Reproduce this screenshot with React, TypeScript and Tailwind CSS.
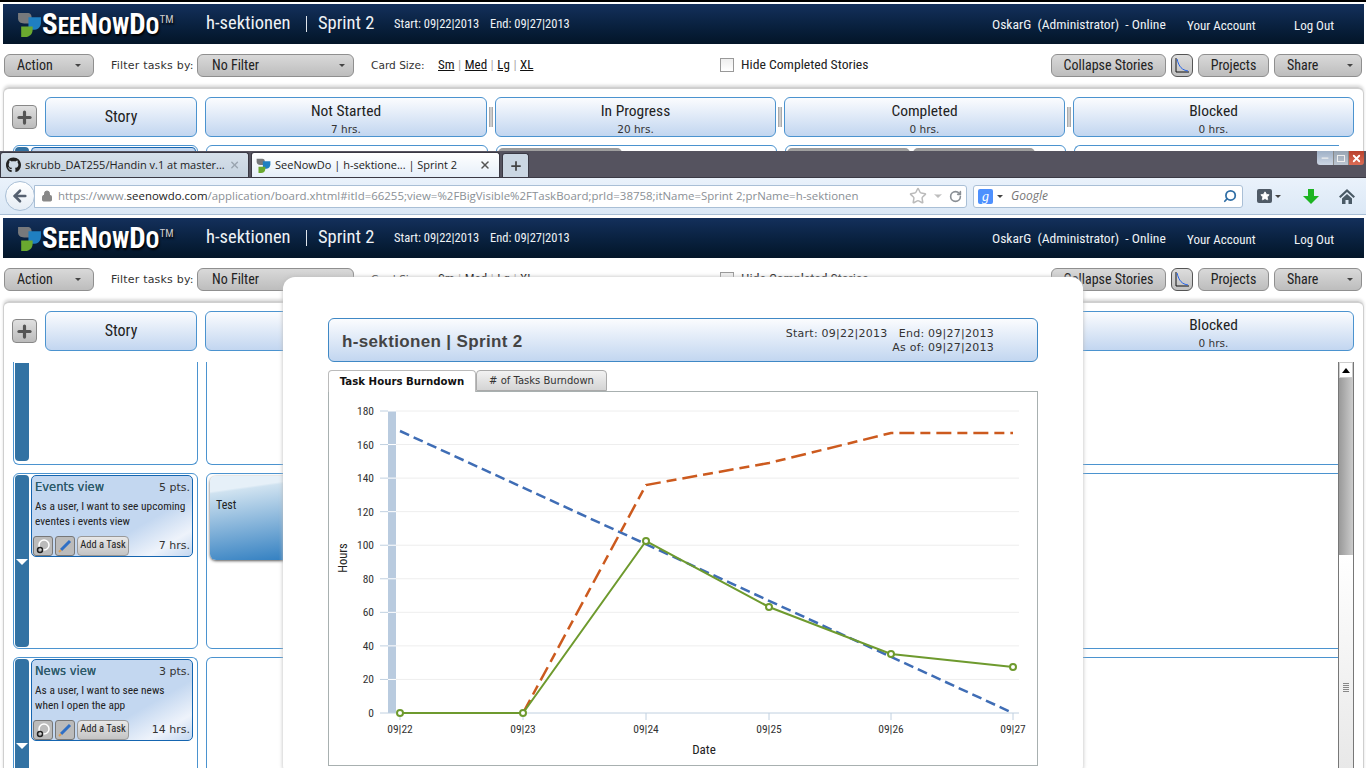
import { ArrowLeft, ChevronDown, Lock, Minus, Plus, RotateCw, Search, Star, X } from "lucide-react";
import { FaGithub } from "react-icons/fa";

const wide = "font-['DejaVu_Sans',sans-serif]";
const COLUMNS = [
  { name: "Not Started", hrs: "7 hrs.", width: "w-[282px]" },
  { name: "In Progress", hrs: "20 hrs.", width: "w-[281px]" },
  { name: "Completed", hrs: "0 hrs.", width: "w-[281px]" },
  { name: "Blocked", hrs: "0 hrs.", width: "w-[281px]" },
];

function Caret() {
  return <span className="h-0 w-0 border-x-[3px] border-t-[3px] border-x-transparent border-t-[#444]" />;
}

function LogoMark({ size = 25 }: { size?: number }) {
  return (
    <svg width={size} height={size} viewBox="0 0 24 24">
      <path d="M1 1h9c3 0 4 2 4 4v6H7C3 11 1 9 1 6z" fill="#77797c" />
      <path d="M11 5h12v5c0 3-2 7-6 7h-6z" fill="#1f7fc1" />
      <path d="M4 14h11v3c0 4-3 7-7 7H4z" fill="#6aa92f" />
    </svg>
  );
}

function AppHeader() {
  return (
    <div className="ml-[3px] mr-[2px] flex h-10 items-center whitespace-nowrap bg-gradient-to-b from-[#14305c] to-[#031528] text-[#eef2f6]">
      <div className="flex w-[203px] items-center pl-[14px]">
        <LogoMark />
        <span className="flex items-baseline font-bold leading-none text-white [text-shadow:1px_2px_2px_#000]">
          <span className="text-[29px]">S</span>
          <span className="text-[23px]">EE</span>
          <span className="text-[29px]">N</span>
          <span className="text-[23px]">OW</span>
          <span className="text-[29px]">D</span>
          <span className="text-[23px]">O</span>
          <span className="relative -top-[11px] text-[11px] font-normal text-[#ccc]">TM</span>
        </span>
      </div>
      <span className="w-[100px] text-[18.5px]">h-sektionen</span>
      <span className="h-[16px] w-[12px] border-l border-[#dfe5ec]" />
      <span className="w-[76px] text-[18.5px]">Sprint 2</span>
      <span className="mt-[1px] w-[96px] text-[12.5px]">Start: 09|22|2013</span>
      <span className="mt-[1px] w-[502px] text-[12.5px]">End: 09|27|2013</span>
      <span className="mt-[1px] w-[195px] text-[13.6px]">OskarG&nbsp; (Administrator)&nbsp; - Online</span>
      <span className="mt-[3px] w-[107px] text-[13px]">Your Account</span>
      <span className="mt-[3px] text-[13px]">Log Out</span>
    </div>
  );
}

function GreyButton({ label, width, caret, textClass }: { label: string; width: string; caret?: boolean; textClass?: string }) {
  return (
    <div className={`flex h-[23px] shrink-0 items-center justify-between rounded-[6px] border border-[#8f8f8f] bg-gradient-to-b from-[#d9d9d9] to-[#bdbdbd] text-[14px] text-[#222] ${width} ${textClass ?? "px-3"}`}>
      <span>{label}</span>
      {caret && <Caret />}
    </div>
  );
}

function Toolbar() {
  return (
    <div className="flex h-[43px] items-center whitespace-nowrap pb-[1px] pl-1">
      <GreyButton label="Action" width="w-[90px]" caret />
      <span className={`ml-[17px] mt-[2px] w-[86px] shrink-0 text-[11px] tracking-[0.2px] text-[#333] [font-stretch:100%] ${wide}`}>Filter tasks by:</span>
      <GreyButton label="No Filter" width="w-[157px]" caret textClass="pl-[14px] pr-2" />
      <span className={`ml-[17px] mt-[2px] w-[67px] shrink-0 text-[10.6px] text-[#333] [font-stretch:100%] ${wide}`}>Card Size:</span>
      <span className="flex w-[282px] shrink-0 gap-[3.5px] text-[13px] text-[#111]">
        <span className="underline">Sm</span><span className="text-[#aaa]">|</span>
        <span className="underline">Med</span><span className="text-[#aaa]">|</span>
        <span className="underline">Lg</span><span className="text-[#aaa]">|</span>
        <span className="underline">XL</span>
      </span>
      <span className="h-[14px] w-[14px] shrink-0 border border-[#999] bg-gradient-to-b from-[#eee] to-white" />
      <span className="-mt-[2px] ml-[7px] w-[310px] shrink-0 text-[13.7px] text-[#222]">Hide Completed Stories</span>
      <GreyButton label="Collapse Stories" width="w-[115px]" textClass="justify-center" />
      <div className="ml-[5px] flex h-[23px] w-[22px] shrink-0 items-center justify-center rounded-[6px] border border-[#555] bg-gradient-to-b from-[#ddd] to-[#c0c0c0]">
        <svg width="16" height="17" viewBox="0 0 16 17" fill="none">
          <path d="M2 1v14h13" stroke="#111" />
          <path d="M3 2c2 8 5 11 11 12" stroke="#2563eb" />
        </svg>
      </div>
      <GreyButton label="Projects" width="ml-[5px] w-[71px]" textClass="justify-center" />
      <GreyButton label="Share" width="ml-[5px] w-[88px]" caret textClass="pl-3 pr-2" />
    </div>
  );
}

function ColumnHead({ name, hrs, width, covered }: { name: string; hrs: string; width: string; covered?: boolean }) {
  return (
    <div className={`flex h-10 shrink-0 flex-col items-center justify-center rounded-[6px] border border-[#4b93cf] bg-gradient-to-b from-[#fbfcfe] to-[#c2d6f0] pt-[4px] ${width}`}>
      {!covered && (
        <>
          <span className="text-[15.5px] leading-[19px] text-[#222]">{name}</span>
          <span className={`mt-[2px] text-[10.5px] leading-[13px] text-[#333] [font-stretch:100%] ${wide}`}>{hrs}</span>
        </>
      )}
    </div>
  );
}

function Grip() {
  return <div className="mx-[2px] h-5 w-[4px] shrink-0 self-center border-x border-[#aaa] bg-[#ccc]" />;
}

// covered: the chart dialog sits over the middle columns, their labels never show
function BoardHead({ covered }: { covered?: boolean }) {
  return (
    <div className="flex pl-[8px] pt-[8px]">
      <div className="mt-2 flex h-[24px] w-[25px] shrink-0 items-center justify-center rounded-[4px] border border-[#888] bg-gradient-to-b from-[#e0e0e0] to-[#bbb]">
        <Plus size={19} strokeWidth={4} color="#555" />
      </div>
      <div className="ml-2 flex h-10 w-[152px] shrink-0 items-center justify-center rounded-[6px] border border-[#4b93cf] bg-gradient-to-b from-[#fbfcfe] to-[#c2d6f0] text-[16px] text-[#222]">
        Story
      </div>
      <div className="w-2 shrink-0" />
      <ColumnHead {...COLUMNS[0]} covered={covered} />
      <Grip />
      <ColumnHead {...COLUMNS[1]} covered={covered} />
      <Grip />
      <ColumnHead {...COLUMNS[2]} covered={covered} />
      <Grip />
      <ColumnHead {...COLUMNS[3]} />
    </div>
  );
}

function TaskStub({ width }: { width: string }) {
  return <div className={`mt-[2px] ml-[1px] h-4 rounded-t-[5px] bg-gradient-to-b from-[#999] to-[#bbb] ${width}`} />;
}

function TopSection() {
  return (
    <section className="h-[151px] shrink-0 overflow-hidden border-t-2 border-black pt-[2px]">
      <AppHeader />
      <Toolbar />
      <div className="ml-[3px] mr-[2px] h-[70px] rounded-t-[6px] border-x border-t-2 border-[#cfcfcf] shadow-[0_-2px_3px_#ddd]">
        <BoardHead />
        <div className="mt-2 flex pl-[9px]">
          <div className="flex h-6 w-[185px] shrink-0 gap-[2px] rounded-t-[6px] border border-[#4b93cf] p-[1px]">
            <div className="h-4 w-[14px] rounded-t-[4px] bg-[#3272a3]" />
            <div className="h-4 flex-1 rounded-t-[4px] border border-[#1565b0] bg-[#c3d7f0]" />
          </div>
          <div className="ml-2 h-6 w-[282px] shrink-0 rounded-t-[6px] border border-[#4b93cf]" />
          <div className="ml-2 h-6 w-[281px] shrink-0 rounded-t-[6px] border border-[#4b93cf]"><TaskStub width="w-[124px]" /></div>
          <div className="ml-2 flex h-6 w-[281px] shrink-0 gap-[2px] rounded-t-[6px] border border-[#4b93cf]">
            <TaskStub width="w-[123px]" /><TaskStub width="w-[122px]" />
          </div>
          <div className="ml-2 h-6 w-[265px] shrink-0 rounded-tl-[6px] border-l border-t border-[#4b93cf]" />
        </div>
      </div>
    </section>
  );
}

function BrowserTab({ active, children, closeColor }: { active?: boolean; children: React.ReactNode; closeColor: string }) {
  return (
    <div className={`flex h-[25px] w-[249px] shrink-0 items-center gap-1 whitespace-nowrap rounded-t-[3px] border border-b-0 border-[#3a3944] px-1 font-['Open_Sans',sans-serif] text-[11px] text-[#222] [font-stretch:100%] ${active ? "bg-gradient-to-b from-white to-[#e6eff9]" : "bg-gradient-to-b from-[#d6e0ea] to-[#c6d3e0]"}`}>
      {children}
      <X size={12} strokeWidth={3} color={closeColor} className="ml-auto mr-1" />
    </div>
  );
}

function BrowserChrome() {
  return (
    <section className="shrink-0">
      <div className="flex h-[27px] items-end gap-[2px] border-b border-[#3a3944] bg-[#55535f]">
        <BrowserTab closeColor="#9aa5b0">
          <FaGithub size={16} color="#222" className="ml-[1px]" />
          <span>skrubb_DAT255/Handin v.1 at master...</span>
        </BrowserTab>
        <BrowserTab active closeColor="#555">
          <LogoMark size={15} />
          <span>SeeNowDo | h-sektione... | Sprint 2</span>
        </BrowserTab>
        <div className="flex h-[24px] w-[27px] items-center justify-center rounded-t-[3px] border border-b-0 border-[#3a3944] bg-[#cbd7e3]">
          <Plus size={14} strokeWidth={3} color="#444" />
        </div>
        <div className="mb-auto ml-auto mr-[2px] flex h-[14px] overflow-hidden rounded-b-[3px]">
          <div className="flex w-4 items-center justify-center bg-gradient-to-b from-[#9fb0c6] to-[#ccd6e4]"><Minus size={10} strokeWidth={3} color="#eee" /></div>
          <div className="flex w-4 items-center justify-center border-x border-[#888] bg-gradient-to-b from-[#98a4b2] to-[#bcc6d2]"><div className="h-[7px] w-[8px] border border-[#eee]" /></div>
          <div className="flex w-[15px] items-center justify-center bg-gradient-to-b from-[#b8402c] to-[#dc6c55]"><X size={11} strokeWidth={4} color="#fff" /></div>
        </div>
      </div>
      <div className="flex h-[37px] items-center border-b border-[#a9bfd6] bg-gradient-to-b from-[#eaf2fb] to-[#dbe8f6] font-['Open_Sans',sans-serif] [font-stretch:100%]">
        <div className="z-10 ml-[5px] flex h-[30px] w-[30px] shrink-0 items-center justify-center rounded-full border border-[#a9bfd6] bg-gradient-to-b from-white to-[#e6edf5]">
          <ArrowLeft size={18} strokeWidth={3.5} color="#556070" />
        </div>
        <div className="-ml-px flex h-[23px] w-[933px] shrink-0 items-center rounded-r-[3px] border border-[#a9bfd6] bg-white pl-[6px] text-[11.45px]">
          <Lock size={12} color="#888" fill="#888" />
          <span className="ml-[5px] whitespace-nowrap text-[#8a8f95]">https://www.<span className="text-[#222]">seenowdo.com</span>/application/board.xhtml#itId=66255;view=%2FBigVisible%2FTaskBoard;prId=38758;itName=Sprint 2;prName=h-sektionen</span>
          <span className="ml-auto flex items-center gap-[5px] pr-1">
            <Star size={18} color="#bbb" />
            <ChevronDown size={12} color="#bbb" fill="#bbb" />
            <RotateCw size={13} strokeWidth={3} color="#8a8f95" />
          </span>
        </div>
        <div className="ml-[6px] flex h-[23px] w-[270px] shrink-0 items-center rounded-[3px] border border-[#a9bfd6] bg-white pl-1 text-[12px]">
          <span className="flex h-[15px] w-[15px] items-center justify-center rounded-[2px] bg-[#4d90fe] font-['Liberation_Serif',serif] text-[14px] italic text-white">g</span>
          <span className="ml-1 flex"><Caret /></span>
          <span className="ml-2 italic text-[#777]">Google</span>
          <Search size={14} strokeWidth={3} color="#2f6ea5" className="ml-auto mr-[5px] -scale-x-100" />
        </div>
        <div className="ml-[14px] flex h-[14px] w-[15px] shrink-0 items-center justify-center rounded-[2px] bg-[#4f5a66]">
          <Star size={10} color="#fff" fill="#fff" />
        </div>
        <span className="ml-[3px] flex"><Caret /></span>
        <svg width="16" height="15" viewBox="0 0 16 15" className="ml-[22px] shrink-0">
          <path d="M5 0h6v7h5l-8 8-8-8h5z" fill="#1db422" />
        </svg>
        <svg width="16" height="15" viewBox="0 0 16 15" className="ml-[20px] shrink-0">
          <path d="M8 0 0 7.500l1.500 1.500L8 3l6.500 6 1.500-1.500z" fill="#4a5a66" />
          <path d="M3 9.500 8 5l5 4.500V15H9.500v-4h-3v4H3z" fill="#4a5a66" />
        </svg>
      </div>
      <div className="h-[3px] bg-white" />
    </section>
  );
}

function StoryCard({ title, pts, lines, hrs }: { title: string; pts: string; lines: string[]; hrs: string }) {
  return (
    <div className="h-[82px] w-[162px] shrink-0 whitespace-nowrap rounded-[5px] border border-[#1565b0] bg-[linear-gradient(150deg,#c3d7f0_65%,#eef3fb_85%,#c3d7f0_100%)] leading-none">
      <div className={`flex items-center justify-between pl-[3px] pr-[2px] pt-[6px] text-[#333] [font-stretch:100%] ${wide}`}>
        <span className="text-[11.5px] text-[#2d5a6a] [text-shadow:0_0_0.6px_#2d5a6a]">{title}</span>
        <span className="text-[11px]">{pts}</span>
      </div>
      <div className="pl-[3px] pr-1 pt-[5px] text-[11.4px] leading-[15px] text-[#222]">
        {lines.map((line) => <div key={line}>{line}</div>)}
      </div>
      <div className="flex items-center gap-[2px] pl-[1px] pt-[7px]">
        <div className="flex h-5 w-5 items-center justify-center rounded-[3px] border border-[#777] bg-[#bbb]">
          <svg width="16" height="16" viewBox="0 0 16 16" fill="none">
            <circle cx="9" cy="7" r="5" stroke="#fff" strokeWidth="1.5" />
            <circle cx="5" cy="12" r="2.5" stroke="#222" strokeWidth="1.5" />
          </svg>
        </div>
        <div className="flex h-5 w-5 items-center justify-center rounded-[3px] border border-[#777] bg-[#bbb]">
          <svg width="16" height="16" viewBox="0 0 16 16" fill="none">
            <path d="M13 3 4 12" stroke="#2f6fc5" strokeWidth="3" />
            <path d="M4 12 2 14" stroke="#d9a05a" strokeWidth="2" />
          </svg>
        </div>
        <div className="flex h-5 w-[52px] items-center justify-center rounded-[4px] border border-[#999] bg-gradient-to-b from-[#e8e8e8] to-[#c4c4c4] text-[10.5px] text-[#222]">
          Add a Task
        </div>
        <span className={`ml-auto pr-[2px] text-[11px] text-[#333] [font-stretch:100%] ${wide}`}>{hrs}</span>
      </div>
    </div>
  );
}

function BoardRow({ height, card, task, clipped, collapsedTop }: { height: string; card?: React.ReactNode; task?: boolean; clipped?: boolean; collapsedTop?: boolean }) {
  const cell = `relative shrink-0 border-[#4b93cf] ${collapsedTop ? "border-b rounded-b-[6px] border-x" : clipped ? "border-x border-t rounded-t-[6px]" : "border rounded-[6px]"}`;
  return (
    <div className={`flex shrink-0 ${height}`}>
      <div className={`${cell} ml-[9px] flex w-[185px] gap-[2px] p-[1px]`}>
        <div className={`relative w-[14px] shrink-0 bg-[#3272a3] ${collapsedTop ? "mb-[2px] rounded-b-[4px]" : "rounded-t-[4px]"} ${!clipped && !collapsedTop ? "rounded-b-[4px]" : ""}`}>
          {card && <span className="absolute left-[1px] top-[84px] h-0 w-0 border-x-[6px] border-t-[6px] border-x-transparent border-t-white" />}
        </div>
        {card}
      </div>
      <div className={`${cell} ml-2 w-[282px]`}>
        {task && (
          <div className="ml-[3px] mt-[2px] h-[84px] w-[200px] rounded-[6px] bg-[linear-gradient(172deg,#e6f0f8_14%,#cfe2f0_16%,#2b7bbf_88%)] pl-[6px] pt-[20px] text-[12px] text-[#222] shadow-[0_1px_3px_#555]">
            Test
          </div>
        )}
      </div>
      <div className={`${cell} ml-2 w-[281px]`} />
      <div className={`${cell} ml-2 w-[281px]`} />
      <div className={`${cell} ml-2 w-[265px] !rounded-r-none !border-r-0`} />
    </div>
  );
}

function BottomSection() {
  return (
    <section className="min-h-0 flex-1 overflow-hidden">
      <AppHeader />
      <Toolbar />
      <div className="ml-[3px] mr-[2px] h-[470px] rounded-t-[6px] border-x border-t-2 border-[#cfcfcf] shadow-[0_-2px_3px_#ddd]">
        <BoardHead covered />
        <div className="relative mt-[11px] flex h-[408px] flex-col gap-2 overflow-hidden">
          <BoardRow height="h-[103px]" collapsedTop />
          <BoardRow height="h-[176px]" task card={<StoryCard title="Events view" pts="5 pts." lines={["As a user, I want to see upcoming", "eventes i events view"]} hrs="7 hrs." />} />
          <BoardRow height="h-[120px]" clipped card={<StoryCard title="News view" pts="3 pts." lines={["As a user, I want to see news", "when I open the app"]} hrs="14 hrs." />} />
          <div className="absolute bottom-0 right-[9px] top-0 flex w-[16px] flex-col border-x border-[#777]">
            <div className="flex h-4 items-center justify-center border border-[#ccc] bg-white">
              <span className="h-0 w-0 border-x-[4px] border-b-[5px] border-x-transparent border-b-black" />
            </div>
            <div className="h-[177px] bg-gradient-to-r from-[#999] to-[#ccc]" />
            <div className="flex flex-1 items-center justify-center bg-gradient-to-b from-white to-[#e8e8e8] pt-[50px]">
              <div className="h-[9px] w-[6px] bg-[repeating-linear-gradient(#888_0,#888_1px,transparent_1px,transparent_2px)]" />
            </div>
          </div>
        </div>
      </div>
    </section>
  );
}

const TICKS = [180, 160, 140, 120, 100, 80, 60, 40, 20, 0];
const DATES: [string, number][] = [["09|22", 400], ["09|23", 523], ["09|24", 646], ["09|25", 769], ["09|26", 891], ["09|27", 1013]];
const ACTUAL: [number, number][] = [[400, 713], [523, 713], [646, 541], [769, 607], [891, 654], [1013, 667]];

function BurndownChart() {
  return (
    <svg width="708" height="374" viewBox="329 392 708 374" className="block">
      <rect x="388" y="411" width="8" height="302" fill="#b9cbdf" />
      {TICKS.map((t) => {
        const y = 713 - (t / 180) * 302;
        return (
          <g key={t}>
            <line x1="396" x2="1019" y1={y} y2={y} stroke={t === 0 ? "#c0d0e0" : "#eeeeee"} />
            <line x1="388" x2="396" y1={y} y2={y} stroke={t === 0 ? "#c0d0e0" : "#ffffff"} />
            <line x1="380" x2="388" y1={y} y2={y} stroke="#c0d0e0" />
            <text x="374" y={y + 4} textAnchor="end" fontSize="11.5" fill="#333">{t}</text>
          </g>
        );
      })}
      {DATES.map(([d, x]) => (
        <g key={d}>
          <line x1={x} x2={x} y1="713" y2="720" stroke="#c0d0e0" />
          <text x={x} y="733" textAnchor="middle" fontSize="11.5" fill="#333">{d}</text>
        </g>
      ))}
      <polyline points="400,431 1013,713" fill="none" stroke="#3f6db5" strokeWidth="2.5" strokeDasharray="10 5" />
      <polyline points="523,713 646,485 769,463 891,433 1013,433" fill="none" stroke="#cc5a1e" strokeWidth="2.5" strokeDasharray="15 6 10 6" />
      <polyline points={ACTUAL.map((p) => p.join(",")).join(" ")} fill="none" stroke="#6e9a2e" strokeWidth="2" />
      {ACTUAL.map(([x, y]) => <circle key={x} cx={x} cy={y} r="3" fill="#fff" stroke="#6e9a2e" strokeWidth="2" />)}
      <text x="704" y="754" textAnchor="middle" fontSize="13" fill="#222">Date</text>
      <text transform="translate(347 558) rotate(-90)" textAnchor="middle" fontSize="12.5" fill="#222">Hours</text>
    </svg>
  );
}

function ChartModal() {
  return (
    <div className="absolute left-[283px] top-[277px] h-[500px] w-[800px] rounded-[12px] bg-white px-[45px] pt-[41px] shadow-[0_0_4px_#bbb]">
      <div className="flex h-[44px] items-center justify-between rounded-[6px] border border-[#3f88c5] bg-gradient-to-b from-[#fbfcfe] to-[#c2d6f0] pl-[13px] pr-[43px] text-[#333] [font-stretch:100%]">
        <span className="mt-[3px] font-['Liberation_Sans',sans-serif] text-[17px] font-bold tracking-[0.35px] text-[#444]">h-sektionen | Sprint 2</span>
        <span className={`mt-[1px] text-right text-[11px] leading-[14px] tracking-[0.25px] ${wide}`}>
          Start: 09|22|2013&nbsp;&nbsp; End: 09|27|2013<br />As of: 09|27|2013
        </span>
      </div>
      <div className={`mt-[7px] flex h-[22px] items-end whitespace-nowrap [font-stretch:100%] ${wide}`}>
        <div className="z-10 -mb-px flex h-[22px] w-[148px] items-center justify-center rounded-t-[4px] border border-b-0 border-[#bbb] bg-white text-[10.2px] font-semibold text-[#111]">Task Hours Burndown</div>
        <div className="flex h-[21px] w-[131px] items-center justify-center rounded-t-[4px] border border-[#aaa] bg-gradient-to-b from-[#f2f2f2] to-[#d4d4d4] text-[10px] text-[#333]">
          # of Tasks Burndown
        </div>
      </div>
      <div className="h-[375px] w-[710px] border border-[#a8b0b0]">
        <BurndownChart />
      </div>
    </div>
  );
}

export default function App() {
  return (
    <div className="relative flex h-[768px] w-[1366px] flex-col overflow-hidden bg-white font-['Roboto',sans-serif] [font-stretch:75%]">
      <TopSection />
      <BrowserChrome />
      <BottomSection />
      <ChartModal />
    </div>
  );
}
